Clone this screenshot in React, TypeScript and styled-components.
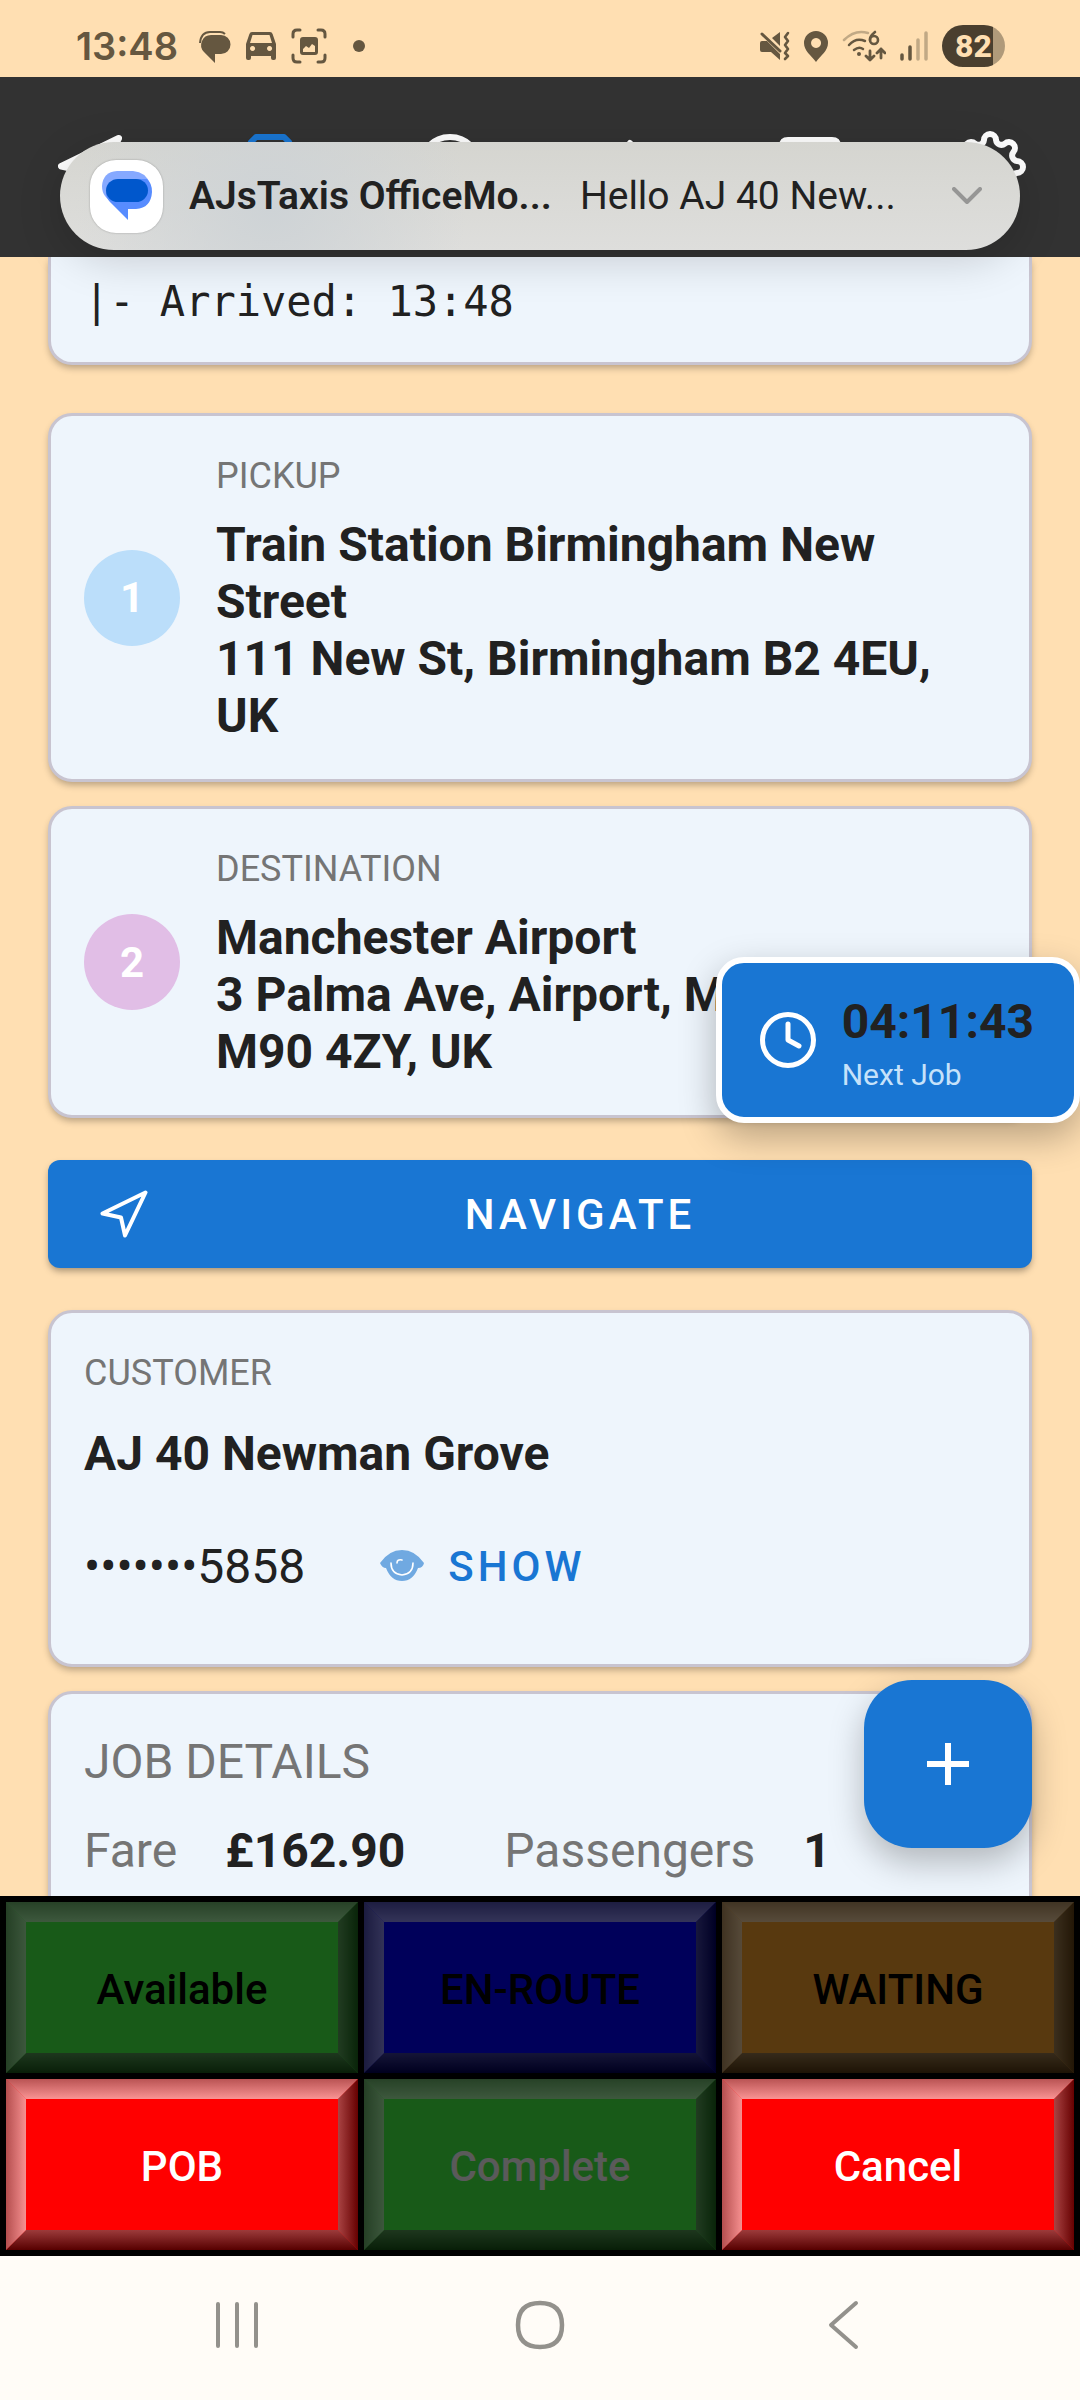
import React from 'react';
import styled, { createGlobalStyle } from 'styled-components';

const color = {
  sand: '#ffdfb2',
  bar: '#323232',
  card: '#eef5fc',
  cardBorder: '#c8c4d0',
  primary: '#1976d3',
  text: '#212121',
  muted: '#757575',
  status: '#655740',
};

const GlobalStyle = createGlobalStyle`
  *, *::before, *::after { box-sizing: border-box; }
  body {
    margin: 0;
    background: ${color.sand};
    color: ${color.text};
    font-family: Roboto, "Liberation Sans", sans-serif;
  }
  button { font-family: inherit; border: 0; padding: 0; margin: 0; background: none; color: inherit; }
  h1, h2, p, dl, dt, dd { margin: 0; font-weight: inherit; font-size: inherit; }
  svg { display: block; flex: none; }
`;

const Screen = styled.div`
  position: relative;
  display: flex;
  flex-direction: column;
  height: 100vh;
  overflow: hidden;
`;

/* ---------- system status bar ---------- */

const StatusBar = styled.header`
  flex: none;
  display: flex;
  justify-content: space-between;
  align-items: center;
  height: 77px;
  padding: 15px 75px 0 76px;
  color: ${color.status};
`;

const StatusGroup = styled.div<{ $gap: number }>`
  display: flex;
  align-items: center;
  gap: ${(p) => p.$gap}px;
`;

const Clock = styled.time`
  margin-right: 6px;
  font-family: Inter, sans-serif;
  font-size: 38px;
  font-weight: 600;
  line-height: 42px;
`;

const Dot = styled.span`
  width: 12px;
  height: 12px;
  margin-left: 11px;
  border-radius: 50%;
  background: currentColor;
`;

const Battery = styled.div`
  width: 63px;
  height: 42px;
  border-radius: 21px;
  background: linear-gradient(90deg, #4a3f2f 0 51px, #b09a7a 51px);
  color: ${color.sand};
  padding-left: 13px;
  font-size: 32px;
  font-weight: 800;
  line-height: 42px;
`;

/* ---------- app bar ---------- */

const AppBar = styled.nav`
  flex: none;
  display: grid;
  grid-template-columns: repeat(6, 1fr);
  height: 180px;
  background: ${color.bar};
  color: #fff;
`;

const AppBarButton = styled.button<{ $active?: boolean }>`
  display: grid;
  place-items: center;
  color: ${(p) => (p.$active ? color.primary : '#fff')};
`;

const Notification = styled.button`
  position: absolute;
  z-index: 2;
  top: 142px;
  left: 60px;
  right: 60px;
  display: flex;
  align-items: center;
  height: 108px;
  padding: 0 38px 0 30px;
  border-radius: 54px;
  background: radial-gradient(circle at 22% 60%, #ced3d6 0, rgba(206, 211, 214, 0) 26%),
    linear-gradient(#d5d5d0, #dededc);
  box-shadow: 0 10px 44px rgba(0, 0, 0, 0.17);
  font-size: 39px;
  line-height: 48px;
  text-align: left;
  white-space: nowrap;
`;

const AppBadge = styled.span`
  display: grid;
  place-items: center;
  width: 73px;
  height: 73px;
  margin-right: 26px;
  border-radius: 26px;
  background: #fff;
  box-shadow: 0 0 2px rgba(0, 0, 0, 0.3);
`;

const Sender = styled.span`
  flex: none;
  margin-right: 28px;
  font-weight: 600;
`;

const Preview = styled.span`
  flex: 1;
`;

/* ---------- scrolling content ---------- */

const Content = styled.main`
  flex: 1;
  min-height: 0;
  overflow: hidden;
  padding: 0 48px;
`;

const Card = styled.section`
  margin-bottom: 24px;
  padding: 33px;
  border: 3px solid ${color.cardBorder};
  border-radius: 24px;
  background: ${color.card};
  box-shadow: 0 4px 7px -1px rgba(0, 0, 0, 0.28);
`;

const LogCard = styled(Card)`
  margin-bottom: 48px;
  padding-top: 18px;
  border-top: 0;
  border-radius: 0 0 24px 24px;
  font-family: "DejaVu Sans Mono", monospace;
  font-size: 42px;
  line-height: 54px;
`;

const StopCard = styled(Card)`
  display: flex;
  align-items: center;
  gap: 36px;
`;

const StopNumber = styled.span<{ $tint: string }>`
  flex: none;
  display: grid;
  place-items: center;
  width: 96px;
  height: 96px;
  border-radius: 50%;
  background: ${(p) => p.$tint};
  color: #fff;
  font-size: 42px;
  font-weight: 700;
`;

const Label = styled.h2`
  color: ${color.muted};
  font-size: 36px;
  line-height: 54px;
`;

const Address = styled.p`
  margin: 13px 0 2px;
  font-size: 48px;
  font-weight: 700;
  line-height: 57px;
`;

const NavigateButton = styled.button`
  display: flex;
  align-items: center;
  width: 100%;
  height: 108px;
  margin: 42px 0;
  padding: 0 20px 0 52px;
  border-radius: 12px;
  background: ${color.primary};
  box-shadow: 0 4px 7px -1px rgba(0, 0, 0, 0.35);
  color: #fff;
  font-size: 42px;
  font-weight: 500;
  letter-spacing: 4px;
`;

const NavigateText = styled.span`
  flex: 1;
`;

const CustomerName = styled.p`
  margin: 25px 0 19px;
  font-size: 48px;
  font-weight: 700;
  line-height: 57px;
`;

const PhoneRow = styled.div`
  display: flex;
  align-items: center;
  gap: 75px;
  height: 130px;
  font-size: 48px;
`;

const ShowButton = styled.button`
  display: flex;
  align-items: center;
  gap: 24px;
  color: ${color.primary};
  font-size: 42px;
  font-weight: 500;
  letter-spacing: 4px;
`;

const JobCard = styled(Card)`
  padding-bottom: 96px;
`;

const CardTitle = styled.h2`
  margin-bottom: 26px;
  color: ${color.muted};
  font-size: 48px;
  line-height: 69px;
`;

const Facts = styled.dl`
  display: flex;
  gap: 99px;
  font-size: 48px;
  line-height: 57px;
`;

const Fact = styled.div`
  display: flex;
  gap: 48px;
  dt { color: ${color.muted}; }
  dd { font-weight: 700; }
`;

/* ---------- floating controls ---------- */

const NextJob = styled.button`
  position: absolute;
  z-index: 1;
  top: 957px;
  right: 0;
  display: flex;
  align-items: center;
  gap: 26px;
  height: 166px;
  padding: 0 40px 0 38px;
  border: 6px solid #fff;
  border-radius: 28px;
  background: ${color.primary};
  box-shadow: 0 14px 36px rgba(0, 0, 0, 0.28);
  text-align: left;
`;

const Countdown = styled.span`
  display: block;
  color: ${color.text};
  font-size: 48px;
  font-weight: 700;
  line-height: 70px;
`;

const NextLabel = styled.span`
  display: block;
  color: #c6e2fa;
  font-size: 30px;
  line-height: 36px;
`;

const AddButton = styled.button`
  position: absolute;
  z-index: 1;
  right: 48px;
  bottom: 552px;
  display: grid;
  place-items: center;
  width: 168px;
  height: 168px;
  border-radius: 48px;
  background: ${color.primary};
  box-shadow: 0 14px 34px rgba(0, 0, 0, 0.26);
`;

/* ---------- job status pad ---------- */

const StatusPad = styled.div`
  position: relative;
  z-index: 2;
  flex: none;
  display: grid;
  grid-template-columns: repeat(3, 1fr);
  grid-auto-rows: 171px;
  gap: 6px;
  padding: 6px;
  background: #000;
`;

const PadButton = styled.button<{ $fill: string; $ink: string }>`
  position: relative;
  padding-top: 3px;
  background: ${(p) => p.$fill};
  color: ${(p) => p.$ink};
  font-size: 42px;
  font-weight: 500;

  &:disabled { opacity: 0.353; }

  /* mitred bevel: first pair of edges is top and bottom, second is left and right */
  &::before, &::after { content: ""; position: absolute; inset: 0; }
  &::before {
    background:
      linear-gradient(rgba(139, 139, 139, 0.6), rgba(246, 246, 246, 0.6)) top / 100% 20px no-repeat,
      linear-gradient(rgba(95, 95, 95, 0.62), rgba(0, 0, 0, 0.66)) bottom / 100% 20px no-repeat;
    clip-path: polygon(0 0, 100% 0, calc(100% - 20px) 20px, calc(100% - 20px) calc(100% - 20px),
      100% 100%, 0 100%, 20px calc(100% - 20px), 20px 20px);
  }
  &::after {
    background:
      linear-gradient(90deg, rgba(130, 130, 130, 0.6), rgba(240, 240, 240, 0.6)) left / 20px 100% no-repeat,
      linear-gradient(90deg, rgba(112, 112, 112, 0.6), rgba(0, 0, 0, 0.6)) right / 20px 100% no-repeat;
    clip-path: polygon(0 0, 20px 20px, calc(100% - 20px) 20px, 100% 0, 100% 100%,
      calc(100% - 20px) calc(100% - 20px), 20px calc(100% - 20px), 0 100%);
  }
`;

/* ---------- system navigation ---------- */

const SystemNav = styled.nav`
  position: relative;
  z-index: 2;
  flex: none;
  display: flex;
  justify-content: space-between;
  align-items: center;
  height: 144px;
  padding: 0 186px 6px;
  background: #fffcf7;
  color: #93918c;
`;

const SystemButton = styled.button`
  display: grid;
  place-items: center;
  width: 102px;
  height: 96px;
`;

/* ---------- icons ---------- */

const line = {
  fill: 'none',
  stroke: 'currentColor',
  strokeLinecap: 'round' as const,
  strokeLinejoin: 'round' as const,
};

const ChatIcon = () => (
  <svg width="32" height="34" viewBox="0 0 32 34" fill="currentColor">
    <path d="M12 6h10a9 9 0 0 1 0 19h-6v9L5 23A10 10 0 0 1 12 6z" />
    <path d="M1 14Q2 3 11 3h10q3 0 5 2" fill="none" stroke="currentColor" strokeWidth="2" />
  </svg>
);

const CarIcon = () => (
  <svg width="30" height="28" viewBox="0 0 30 28" fill="currentColor" fillRule="evenodd">
    <path d="M6 0h18q2 0 2.600 2L30 12v14q0 2-2 2h-1q-2 0-2-2v-2H5v2q0 2-2 2H2q-2 0-2-2V12L3.400 2Q4 0 6 0zM6.500 3 4 11h22l-2.500-8zM6.500 14a2.500 2.500 0 1 0 .1 0zM23.500 14a2.500 2.500 0 1 0 .1 0z" />
  </svg>
);

const CaptureIcon = () => (
  <svg width="36" height="36" viewBox="0 0 36 36">
    <path {...line} strokeWidth="3" d="M2 9V6q0-4 4-4h3M27 2h3q4 0 4 4v3M34 27v3q0 4-4 4h-3M9 34H6q-4 0-4-4v-3" />
    <path fill="currentColor" fillRule="evenodd" d="M12 9h12q3 0 3 3v12q0 3-3 3H12q-3 0-3-3V12q0-3 3-3zM12 21v3h12v-6l-3-2-3 4-3-2z" />
  </svg>
);

const MuteIcon = () => (
  <svg width="30" height="30" viewBox="0 0 30 30" fill="currentColor">
    <path d="M0 12q0-2 2-2h5l13 13v6l-9-8H2q-2 0-2-2zM12 7l8-6v14z" />
    <path {...line} strokeWidth="3" d="m2 3 18 17" />
    <path {...line} strokeWidth="2.600" d="m28 2-3 4 3 4-3 4 3 4-3 4 3 3-3 3" />
  </svg>
);

const PinIcon = () => (
  <svg width="24" height="31" viewBox="0 0 24 31" fill="currentColor" fillRule="evenodd">
    <path d="M12 0a12 12 0 0 1 12 12c0 8-7 12-12 19C7 24 0 20 0 12A12 12 0 0 1 12 0zM12 7a5 5 0 1 0 .1 0z" />
  </svg>
);

const WifiIcon = () => (
  <svg width="44" height="32" viewBox="0 0 44 32">
    <path {...line} strokeWidth="2.500" opacity=".4" d="M2 10Q13-1 26 3" />
    <path {...line} strokeWidth="2.500" d="M7 15Q14 7 23 11M12 20q5-4 9-1" />
    <circle cx="17" cy="24" r="2" fill="currentColor" />
    <path {...line} strokeWidth="2.600" d="M33 2q-6 5-5 8" />
    <circle {...line} cx="32" cy="10" r="4" strokeWidth="2.600" />
    <path {...line} strokeWidth="2.800" d="M28 21v9m-4-4 4 4 4-4M39 28v-9m-4 4 4-4 4 4" />
  </svg>
);

const SignalIcon = () => (
  <svg width="28" height="30" viewBox="0 0 28 30">
    <path {...line} strokeWidth="3.500" d="M2 24v4M10 16v12" />
    <path {...line} strokeWidth="3.500" opacity=".4" d="M18 9v19M26 2v26" />
  </svg>
);

const ArrowIcon = ({ size, stroke }: { size: number; stroke: number }) => (
  <svg width={size} height={size} viewBox="0 0 48 48">
    <path {...line} strokeWidth={stroke} d="M45.500 2.500 2.500 23.500 21 27.500 25 45.500z" />
  </svg>
);

const TaxiIcon = () => (
  <svg width="72" height="72" viewBox="0 0 72 72">
    <path {...line} strokeWidth="6" d="M22 6h28l5 5 9 25v27H8V36l9-25zM10 36h52M20 49h3M49 49h3" />
  </svg>
);

const HistoryIcon = () => (
  <svg width="72" height="72" viewBox="0 0 72 72">
    <circle {...line} cx="36" cy="36" r="30" strokeWidth="6" />
    <path {...line} strokeWidth="6" d="M36 18v20l12 6" />
  </svg>
);

const AlertIcon = () => (
  <svg width="72" height="72" viewBox="0 0 72 72">
    <path {...line} strokeWidth="6" d="M36 12 64 62H8zM36 30v16" />
  </svg>
);

const MessageIcon = () => (
  <svg width="72" height="72" viewBox="0 0 72 72">
    <path {...line} strokeWidth="6" d="M14 9h44q6 0 6 6v34q0 6-6 6H30L18 65V55h-4q-6 0-6-6V15q0-6 6-6z" />
  </svg>
);

const gearPath = (() => {
  const teeth = 8;
  const radius = 27;
  const half = 6;
  const at = (x: number, y: number, turn: number) => {
    const a = (turn * 2 * Math.PI) / teeth;
    const px = 36 + x * Math.cos(a) - y * Math.sin(a);
    const py = 36 + x * Math.sin(a) + y * Math.cos(a);
    return `${px.toFixed(2)} ${py.toFixed(2)}`;
  };
  let d = `M${at(-half, -radius, 0)}`;
  for (let i = 0; i < teeth; i += 1) {
    d += `A6 6 0 0 1 ${at(half, -radius, i)}A5.500 5.500 0 0 0 ${at(-half, -radius, i + 1)}`;
  }
  return `${d}z`;
})();

const GearIcon = () => (
  <svg width="72" height="72" viewBox="0 0 72 72">
    <path {...line} strokeWidth="6" d={gearPath} />
    <circle {...line} cx="36" cy="36" r="10" strokeWidth="6" />
  </svg>
);

const MessagesLogo = () => (
  <svg width="50" height="50" viewBox="0 0 50 50">
    <path fill="#86a9ff" d="M15 0h16q13 1 17 13L12 31Q0 27 0 15 1 1 15 0z" />
    <path fill="#578cff" d="M35 8h10q5 4 5 13-1 16-16 17h-8v11L8 31Q4 27 4 22z" />
    <rect fill="#0057cc" x="4" y="8" width="42" height="23" rx="12" />
  </svg>
);

const ChevronIcon = () => (
  <svg width="30" height="18" viewBox="0 0 30 18">
    <path {...line} stroke="#969695" strokeWidth="4" d="m2 2 13 13L28 2" />
  </svg>
);

const ClockIcon = () => (
  <svg width="56" height="56" viewBox="0 0 56 56" color="#fff">
    <circle {...line} cx="28" cy="28" r="25.500" strokeWidth="5" />
    <path {...line} strokeWidth="5" d="M28 12v16l11 6" />
  </svg>
);

const EyeIcon = () => (
  <svg width="44" height="32" viewBox="0 0 44 32">
    <path fill="#70a9e1" d="M0 13Q9 0 22 0t22 13q-1 5-6 5-5 13-16 13T6 18q-4 0-6-5z" />
    <path {...line} stroke="#fff" strokeWidth="1.600" d="M11 13q0 11 11 12 11-1 11-12M22 10q-5-1-5 3" />
  </svg>
);

const PlusIcon = () => (
  <svg width="42" height="42" viewBox="0 0 42 42">
    <path d="M21 0v42M0 21h42" stroke="#fff" strokeWidth="6" />
  </svg>
);

/* ---------- data ---------- */

const stops = [
  {
    label: 'PICKUP',
    tint: '#bbdefa',
    lines: ['Train Station Birmingham New Street', '111 New St, Birmingham B2 4EU, UK'],
  },
  {
    label: 'DESTINATION',
    tint: '#e1bee6',
    lines: ['Manchester Airport', '3 Palma Ave, Airport, Manchester M90 4ZY, UK'],
  },
];

const pad = [
  { text: 'Available', fill: '#44ff44', ink: '#000', disabled: true },
  { text: 'EN-ROUTE', fill: '#0000ff', ink: '#000', disabled: true },
  { text: 'WAITING', fill: '#f9a22d', ink: '#000', disabled: true },
  { text: 'POB', fill: '#ff0000', ink: '#fff', disabled: false },
  { text: 'Complete', fill: '#44ff44', ink: '#fff', disabled: true },
  { text: 'Cancel', fill: '#ff0000', ink: '#fff', disabled: false },
];

export default function App() {
  return (
    <Screen>
      <GlobalStyle />
      <StatusBar>
        <StatusGroup $gap={15}>
          <Clock>13:48</Clock>
          <ChatIcon />
          <CarIcon />
          <CaptureIcon />
          <Dot />
        </StatusGroup>
        <StatusGroup $gap={14}>
          <MuteIcon />
          <PinIcon />
          <WifiIcon />
          <SignalIcon />
          <Battery>82</Battery>
        </StatusGroup>
      </StatusBar>

      <AppBar>
        <AppBarButton aria-label="Navigate"><ArrowIcon size={64} stroke={5} /></AppBarButton>
        <AppBarButton aria-label="Current job" $active><TaxiIcon /></AppBarButton>
        <AppBarButton aria-label="History"><HistoryIcon /></AppBarButton>
        <AppBarButton aria-label="Alerts"><AlertIcon /></AppBarButton>
        <AppBarButton aria-label="Messages"><MessageIcon /></AppBarButton>
        <AppBarButton aria-label="Settings"><GearIcon /></AppBarButton>
      </AppBar>

      <Notification>
        <AppBadge><MessagesLogo /></AppBadge>
        <Sender>AJsTaxis OfficeMo...</Sender>
        <Preview>Hello AJ 40 New...</Preview>
        <ChevronIcon />
      </Notification>

      <Content>
        <LogCard>|- Arrived: 13:48</LogCard>

        {stops.map((stop, i) => (
          <StopCard key={stop.label}>
            <StopNumber $tint={stop.tint}>{i + 1}</StopNumber>
            <div>
              <Label>{stop.label}</Label>
              <Address>
                {stop.lines[0]}
                <br />
                {stop.lines[1]}
              </Address>
            </div>
          </StopCard>
        ))}

        <NavigateButton>
          <ArrowIcon size={48} stroke={4} />
          <NavigateText>NAVIGATE</NavigateText>
        </NavigateButton>

        <Card>
          <Label>CUSTOMER</Label>
          <CustomerName>AJ 40 Newman Grove</CustomerName>
          <PhoneRow>
            <span>•••••••5858</span>
            <ShowButton>
              <EyeIcon />
              SHOW
            </ShowButton>
          </PhoneRow>
        </Card>

        <JobCard>
          <CardTitle>JOB DETAILS</CardTitle>
          <Facts>
            <Fact><dt>Fare</dt><dd>£162.90</dd></Fact>
            <Fact><dt>Passengers</dt><dd>1</dd></Fact>
          </Facts>
        </JobCard>
      </Content>

      <NextJob>
        <ClockIcon />
        <span>
          <Countdown>04:11:43</Countdown>
          <NextLabel>Next Job</NextLabel>
        </span>
      </NextJob>

      <AddButton aria-label="Add"><PlusIcon /></AddButton>

      <StatusPad>
        {pad.map((b) => (
          <PadButton key={b.text} $fill={b.fill} $ink={b.ink} disabled={b.disabled}>
            {b.text}
          </PadButton>
        ))}
      </StatusPad>

      <SystemNav>
        <SystemButton aria-label="Recent apps">
          <svg width="46" height="48" viewBox="0 0 46 48">
            <path {...line} strokeWidth="4" d="M4 3v42M23 3v42M42 3v42" />
          </svg>
        </SystemButton>
        <SystemButton aria-label="Home">
          <svg width="50" height="50" viewBox="0 0 50 50">
            <path {...line} strokeWidth="4.500" d="M25 3q22 0 22 22T25 47 3 25 25 3z" />
          </svg>
        </SystemButton>
        <SystemButton aria-label="Back">
          <svg width="32" height="50" viewBox="0 0 32 50">
            <path {...line} strokeWidth="4" d="M29 3 4 25l25 22" />
          </svg>
        </SystemButton>
      </SystemNav>
    </Screen>
  );
}
